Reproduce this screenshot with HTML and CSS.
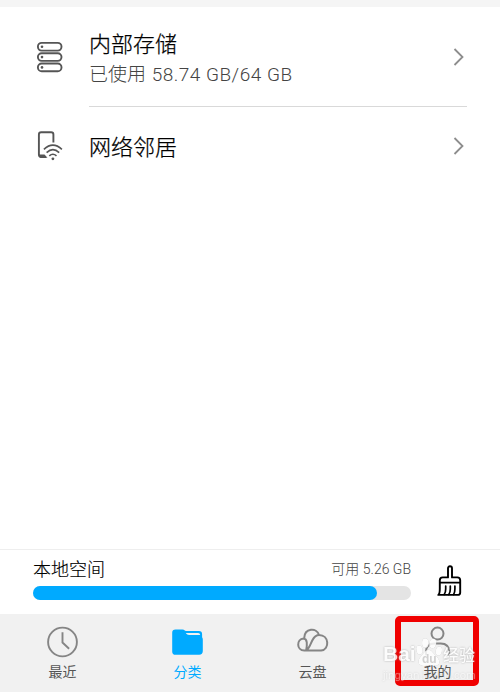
FILE: index.html
```html
<!DOCTYPE html>
<html lang="zh-CN">
<head>
<meta charset="utf-8">
<title>文件管理</title>
<link rel="stylesheet" href="styles.css">
</head>
<body>
<div class="app">
  <main class="list">
    <div class="row row-storage">
      <svg class="row-icon" viewBox="0 0 30 34" fill="none" stroke="#555" stroke-width="1.9">
        <rect x="3.9" y="2.9" width="23.6" height="7.7" rx="3.8"/>
        <rect x="3.9" y="13.2" width="23.6" height="7.7" rx="3.8"/>
        <rect x="3.9" y="23.5" width="23.6" height="7.7" rx="3.8"/>
        <g fill="#555" stroke="none"><circle cx="8" cy="6.8" r="1.3"/><circle cx="8" cy="17.1" r="1.3"/><circle cx="8" cy="27.4" r="1.3"/></g>
      </svg>
      <div class="row-body">
        <div class="row-text">
          <div class="title">内部存储</div>
          <div class="subtitle">已使用 <span class="figures">58.74 GB/64 GB</span></div>
        </div>
        <svg class="chevron" viewBox="0 0 12 20"><path d="M1.5 2 9.5 10 1.5 18"/></svg>
      </div>
    </div>
    <div class="row row-network">
      <svg class="row-icon" viewBox="0 0 30 34" fill="none" stroke="#555" stroke-width="1.9">
        <path d="M19.4 13.6V5.6Q19.4 3.3 17.1 3.3H7.2Q4.9 3.3 4.9 5.6V25.6Q4.9 28 7.2 28H12"/>
        <path d="M5 25.4H10.5L13.5 28.8H6Z" fill="#555" stroke="none"/>
        <path d="M9.9 20.3Q18.9 12 27.9 20.3M12.6 23.6Q18.9 17.8 25.2 23.6M15.3 26.9Q18.9 23.6 22.5 26.9" stroke-width="1.6"/>
        <circle cx="18.9" cy="29.8" r="1.4" fill="#555" stroke="none"/>
      </svg>
      <div class="row-body">
        <div class="title">网络邻居</div>
        <svg class="chevron" viewBox="0 0 12 20"><path d="M1.5 2 9.5 10 1.5 18"/></svg>
      </div>
    </div>
  </main>

  <section class="space">
    <div class="usage">
      <div class="usage-head"><span class="usage-name">本地空间</span><span class="usage-free">可用 5.26 GB</span></div>
      <div class="bar"><div class="bar-fill"></div></div>
    </div>
    <svg class="brush" viewBox="0 0 26 32" fill="none" stroke="#000" stroke-width="1.9" stroke-linejoin="round" stroke-linecap="round">
      <path d="M11 12.4V3.3Q11 1.3 13 1.3T15 3.3V12.4H20.3Q23.2 12.4 23.2 15.3V27.4Q23.2 29.9 20.8 29.9H1.3Q2.8 28.8 2.8 24V15.3Q2.8 12.4 5.7 12.4Z"/>
      <path d="M2.8 17.7H23.2M8.7 21V24Q8.7 27.6 7.2 29.5M13.3 21V24Q13.3 27.6 11.8 29.5M17.9 21V24Q17.9 27.6 16.6 29.5" stroke-width="1.7"/>
    </svg>
  </section>

  <nav class="tabs">
    <div class="tab">
      <svg class="tab-icon" viewBox="0 0 34 34" fill="none" stroke="#858585" stroke-width="1.9">
        <circle cx="16.5" cy="17" r="14.4"/><path d="M16.5 7.3V17.5L23.1 23.8"/>
      </svg>
      <span>最近</span>
    </div>
    <div class="tab tab-active">
      <svg class="tab-icon" viewBox="0 0 34 34">
        <path d="M4.5 4.4H11.5Q12.9 4.4 13.8 5.4L14.8 6.1H27.9Q31.1 6.1 31.1 9.2V12.2Q31.8 13 31.8 14.2V26.1Q31.8 29.8 28.1 29.8H4.6Q1.2 29.8 1.2 26.4V7.7Q1.2 4.4 4.5 4.4Z" fill="#00aaff"/>
        <path d="M14.8 7.9H27.1Q29 7.9 29.2 10H18.5Q16.6 10 15.6 8.9Z" fill="#f1f1f1"/>
      </svg>
      <span>分类</span>
    </div>
    <div class="tab">
      <svg class="tab-icon" viewBox="0 0 34 34" fill="none" stroke="#858585" stroke-width="2" stroke-linejoin="round">
        <path d="M8.2 13.1C8.6 3 20.8 2.2 23 10C33.2 10 34 24.5 25.1 25.6H8.3C.2 25.2.4 14.2 7.5 13.6C11.6 14.1 11.2 19.2 10.2 25.2M10.3 25.2C14.7 22.9 15.4 12.6 20.4 10.7Q21.6 10 23 10"/>
      </svg>
      <span>云盘</span>
    </div>
    <div class="tab tab-mine">
      <svg class="tab-icon" viewBox="0 0 34 34" fill="none" stroke="#858585" stroke-width="2">
        <circle cx="16.5" cy="8.6" r="6"/><path d="M5 30.2V27Q5 18.4 13.5 18.4H19.7Q28.2 18.4 28.2 27V30.2"/>
      </svg>
      <span>我的</span>
      <div class="highlight"></div>
      <div class="watermark">
        <div class="wm-brand"><span class="wm-latin">Bai</span><svg viewBox="0 0 28 30">
          <g fill="#fff"><ellipse cx="4.5" cy="13" rx="3.1" ry="4.5" transform="rotate(-12 4.5 13)"/><ellipse cx="10.3" cy="6" rx="3.3" ry="4.8"/><ellipse cx="17.8" cy="6.5" rx="3.3" ry="4.8" transform="rotate(12 17.8 6.5)"/><ellipse cx="23.8" cy="14" rx="3.1" ry="4.5" transform="rotate(12 23.8 14)"/><path d="M9 15.5Q14 10 18.3 16L22.8 21Q26.5 26 22 28.5Q18.5 29.6 14 28Q9 29.6 5.8 28.3Q1.5 25.7 5 20.5Z"/></g>
          <text x="7" y="26">du</text></svg><span class="wm-cn">经验</span></div>
        <div class="wm-url">jingyan.baidu.com</div>
      </div>
    </div>
  </nav>
</div>
</body>
</html>
```
FILE: styles.css
```css
* { box-sizing: border-box; }
body { margin: 0; background: #fff; font-family: Roboto, "Noto Sans CJK SC", sans-serif; }
.app { width: 500px; height: 692px; display: flex; flex-direction: column; overflow: hidden; border-top: 7px solid #f5f5f5; }
.list { flex: 1; }
.row { display: flex; padding: 0 33px 0 34px; }
.row-icon { width: 30px; height: 34px; flex: none; margin-right: 25px; }
.row-storage { height: 100px; }
.row-storage .row-icon { margin-top: 33px; }
.row-body { flex: 1; display: flex; justify-content: space-between; }
.row-storage .row-body { border-bottom: 1px solid #d9d9d9; }
.row-text { padding-top: 22px; }
.title { font-size: 22px; line-height: 32px; font-weight: 300; color: #000; -webkit-text-stroke: .25px #000; white-space: nowrap; }
.subtitle { font-size: 19px; line-height: 26px; margin-top: 1px; font-weight: 300; color: #444; white-space: nowrap; }
.figures { color: #444; letter-spacing: .5px; margin-left: 1px; }
.chevron { width: 12px; height: 20px; margin: 40px 2px 0 0; fill: none; stroke: #8d8d8d; stroke-width: 1.8; }
.row-network .row-icon { margin-top: 22px; }
.row-network .title { margin-top: 25px; }
.row-network .chevron { margin-top: 29px; }
.space { height: 65px; display: flex; border-top: 1px solid #eee; padding: 0 37px 0 33px; justify-content: space-between; }
.usage { width: 378px; padding-top: 7px; }
.usage-head { display: flex; height: 26px; justify-content: space-between; line-height: 26px; }
.usage-name { font-size: 18px; font-weight: 300; color: #000; -webkit-text-stroke: .15px #000; }
.usage-free { margin-top: -1px; font-size: 14px; font-weight: 300; color: #444; }
.bar { height: 14px; margin-top: 3px; border-radius: 7px; background: #e4e4e4; }
.bar-fill { width: 344px; height: 14px; border-radius: 7px; background: #00aaff; }
.brush { width: 26px; height: 32px; margin-top: 15px; }
.tabs { height: 78px; display: flex; background: #f1f1f1; }
.tab { position: relative; flex: 1; display: flex; flex-direction: column; align-items: center; padding-top: 11px; font-size: 14px; line-height: 20px; color: #555; }
.tab-icon { width: 34px; height: 34px; margin-bottom: 3px; }
.tab-active { color: #00aaff; }
.highlight { position: absolute; left: 20px; top: 2px; width: 84px; height: 70px; border: 6px solid #f00000; border-radius: 5px; }
.tab-mine > span { position: relative; z-index: 2; }
.watermark { position: absolute; left: 8px; top: 23px; color: #fff; opacity: .85; text-shadow: 0 0 2px #999; white-space: nowrap; }
.wm-brand { display: flex; height: 32px; align-items: flex-end; }
.wm-brand svg { width: 28px; height: 30px; margin: 0 0 2px; filter: drop-shadow(0 0 .7px #aaa); }
.wm-brand text { font: bold 12px "Liberation Sans", sans-serif; fill: #ccc; text-shadow: none; }
.wm-latin { width: 32px; font: bold 21px/30px "Liberation Sans", sans-serif; }
.wm-cn { font: 500 16px/30px "Noto Sans CJK SC", sans-serif; }
.wm-url { font: 11.5px/12px "Liberation Sans", sans-serif; opacity: .5; }
```
